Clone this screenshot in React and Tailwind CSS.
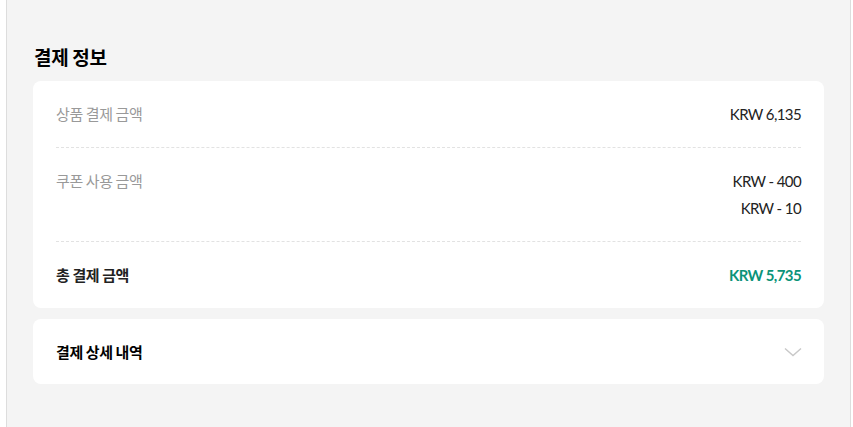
const kr = { fontFamily: '"Noto Sans CJK KR", "Noto Sans", sans-serif' };
const num = { fontFamily: 'Lato, "Noto Sans CJK KR", sans-serif' };

const Row = ({ label, children, bold, last }) => (
  <div
    className={`flex justify-between items-start pt-[22px] pb-[22px] ${
      last ? '' : 'border-b border-dashed border-[#e2e2e2]'
    }`}
  >
    <span
      style={kr}
      className={`text-[15px] leading-[22px] tracking-[-0.4px] ${bold ? 'font-bold text-[#222]' : 'text-[#999]'}`}
    >
      {label}
    </span>
    <div className="flex flex-col items-end gap-[5px]">{children}</div>
  </div>
);

const Value = ({ children, green }) => (
  <span
    style={num}
    className={`text-[15px] leading-[22px] tracking-[-0.6px] ${
      green ? 'font-bold text-[#0b9379]' : 'text-[#222]'
    }`}
  >
    {children}
  </span>
);

export default function App() {
  return (
    <div className="bg-white min-h-[427px]">
      <div className="ml-[6px] w-[845px] min-h-[427px] bg-[#f4f4f4] border-l border-r border-[#dddddd] pt-[44px] px-[26px]">
        <h2 style={kr} className="text-[19px] leading-[26px] font-bold text-black mb-[11px] pl-[1px] tracking-[-0.3px]">
          결제 정보
        </h2>
        <div className="bg-white rounded-[8px] px-[23px]">
          <Row label="상품 결제 금액">
            <Value>KRW 6,135</Value>
          </Row>
          <Row label="쿠폰 사용 금액">
            <Value>KRW - 400</Value>
            <Value>KRW - 10</Value>
          </Row>
          <Row label="총 결제 금액" bold last>
            <Value green>KRW 5,735</Value>
          </Row>
        </div>
        <div className="mt-[11px] bg-white rounded-[8px] px-[23px] pt-[22px] pb-[21px] flex items-center justify-between">
          <span style={kr} className="text-[15px] leading-[22px] tracking-[-0.4px] font-bold text-black">
            결제 상세 내역
          </span>
          <svg width="18" height="10" viewBox="0 0 18 10" className="mr-[-1px]">
            <path d="M1 1.5 L9 8.5 L17 1.5" fill="none" stroke="#c8c8c8" strokeWidth="1.4" />
          </svg>
        </div>
      </div>
    </div>
  );
}
